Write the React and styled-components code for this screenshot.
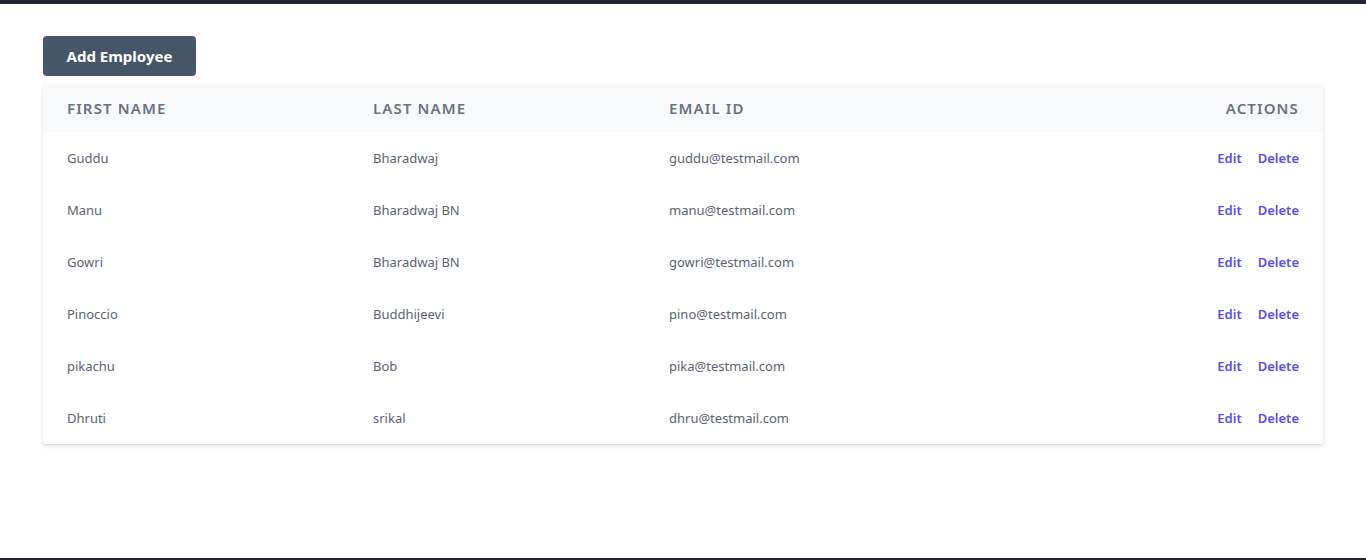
import React from "react";
import styled, { createGlobalStyle } from "styled-components";

const employees = [
  { first: "Guddu", last: "Bharadwaj", email: "guddu@testmail.com" },
  { first: "Manu", last: "Bharadwaj BN", email: "manu@testmail.com" },
  { first: "Gowri", last: "Bharadwaj BN", email: "gowri@testmail.com" },
  { first: "Pinoccio", last: "Buddhijeevi", email: "pino@testmail.com" },
  { first: "pikachu", last: "Bob", email: "pika@testmail.com" },
  { first: "Dhruti", last: "srikal", email: "dhru@testmail.com" },
];

const GlobalStyle = createGlobalStyle`
  html, body {
    margin: 0;
    padding: 0;
    background: #fff;
    font-family: "Noto Sans", "Open Sans", sans-serif;
  }
`;

const Page = styled.div`
  min-height: 560px;
  display: flex;
  flex-direction: column;
`;

const TopBar = styled.div`
  height: 4px;
  background: #1f2430;
`;

const Main = styled.main`
  flex: 1;
  padding: 32px 43px 0 43px;
  display: flex;
  flex-direction: column;
  gap: 8px;
`;

const AddButton = styled.button`
  align-self: flex-start;
  width: 153px;
  height: 40px;
  border: none;
  border-radius: 4px;
  background: #475569;
  color: #fff;
  font-family: inherit;
  font-size: 15px;
  font-weight: 700;
  cursor: pointer;
`;

const Card = styled.div`
  background: #fff;
  border-radius: 3px;
  box-shadow: 0 2px 4px rgba(0, 0, 0, 0.12), 0 1px 2px rgba(0, 0, 0, 0.06);
  overflow: hidden;
`;

const Row = styled.div`
  display: grid;
  grid-template-columns: 306px 296px 1fr auto;
  align-items: center;
  padding: 0 24px;
  height: ${(p) => (p.$head ? 48 : 52)}px;
  background: ${(p) => (p.$head ? "#f7f9fb" : "#fff")};
`;

const HeadCell = styled.div`
  font-size: 15px;
  font-weight: 600;
  letter-spacing: 0.075em;
  text-transform: uppercase;
  color: #6b7280;
  text-align: ${(p) => (p.$right ? "right" : "left")};
`;

const Cell = styled.div`
  font-size: 13px;
  color: #5b6472;
`;

const Actions = styled.div`
  display: flex;
  gap: 16px;
  justify-content: flex-end;
`;

const ActionLink = styled.a`
  font-size: 13px;
  font-weight: 600;
  color: #5a4fe0;
  text-decoration: none;
  cursor: pointer;
`;

const Footer = styled.div`
  height: 2px;
  background: #1f2430;
`;

export default function App() {
  return (
    <Page>
      <GlobalStyle />
      <TopBar />
      <Main>
        <AddButton>Add Employee</AddButton>
        <Card>
          <Row $head>
            <HeadCell>First Name</HeadCell>
            <HeadCell>Last Name</HeadCell>
            <HeadCell>Email Id</HeadCell>
            <HeadCell $right>Actions</HeadCell>
          </Row>
          {employees.map((e) => (
            <Row key={e.email}>
              <Cell>{e.first}</Cell>
              <Cell>{e.last}</Cell>
              <Cell>{e.email}</Cell>
              <Actions>
                <ActionLink>Edit</ActionLink>
                <ActionLink>Delete</ActionLink>
              </Actions>
            </Row>
          ))}
        </Card>
      </Main>
      <Footer />
    </Page>
  );
}
